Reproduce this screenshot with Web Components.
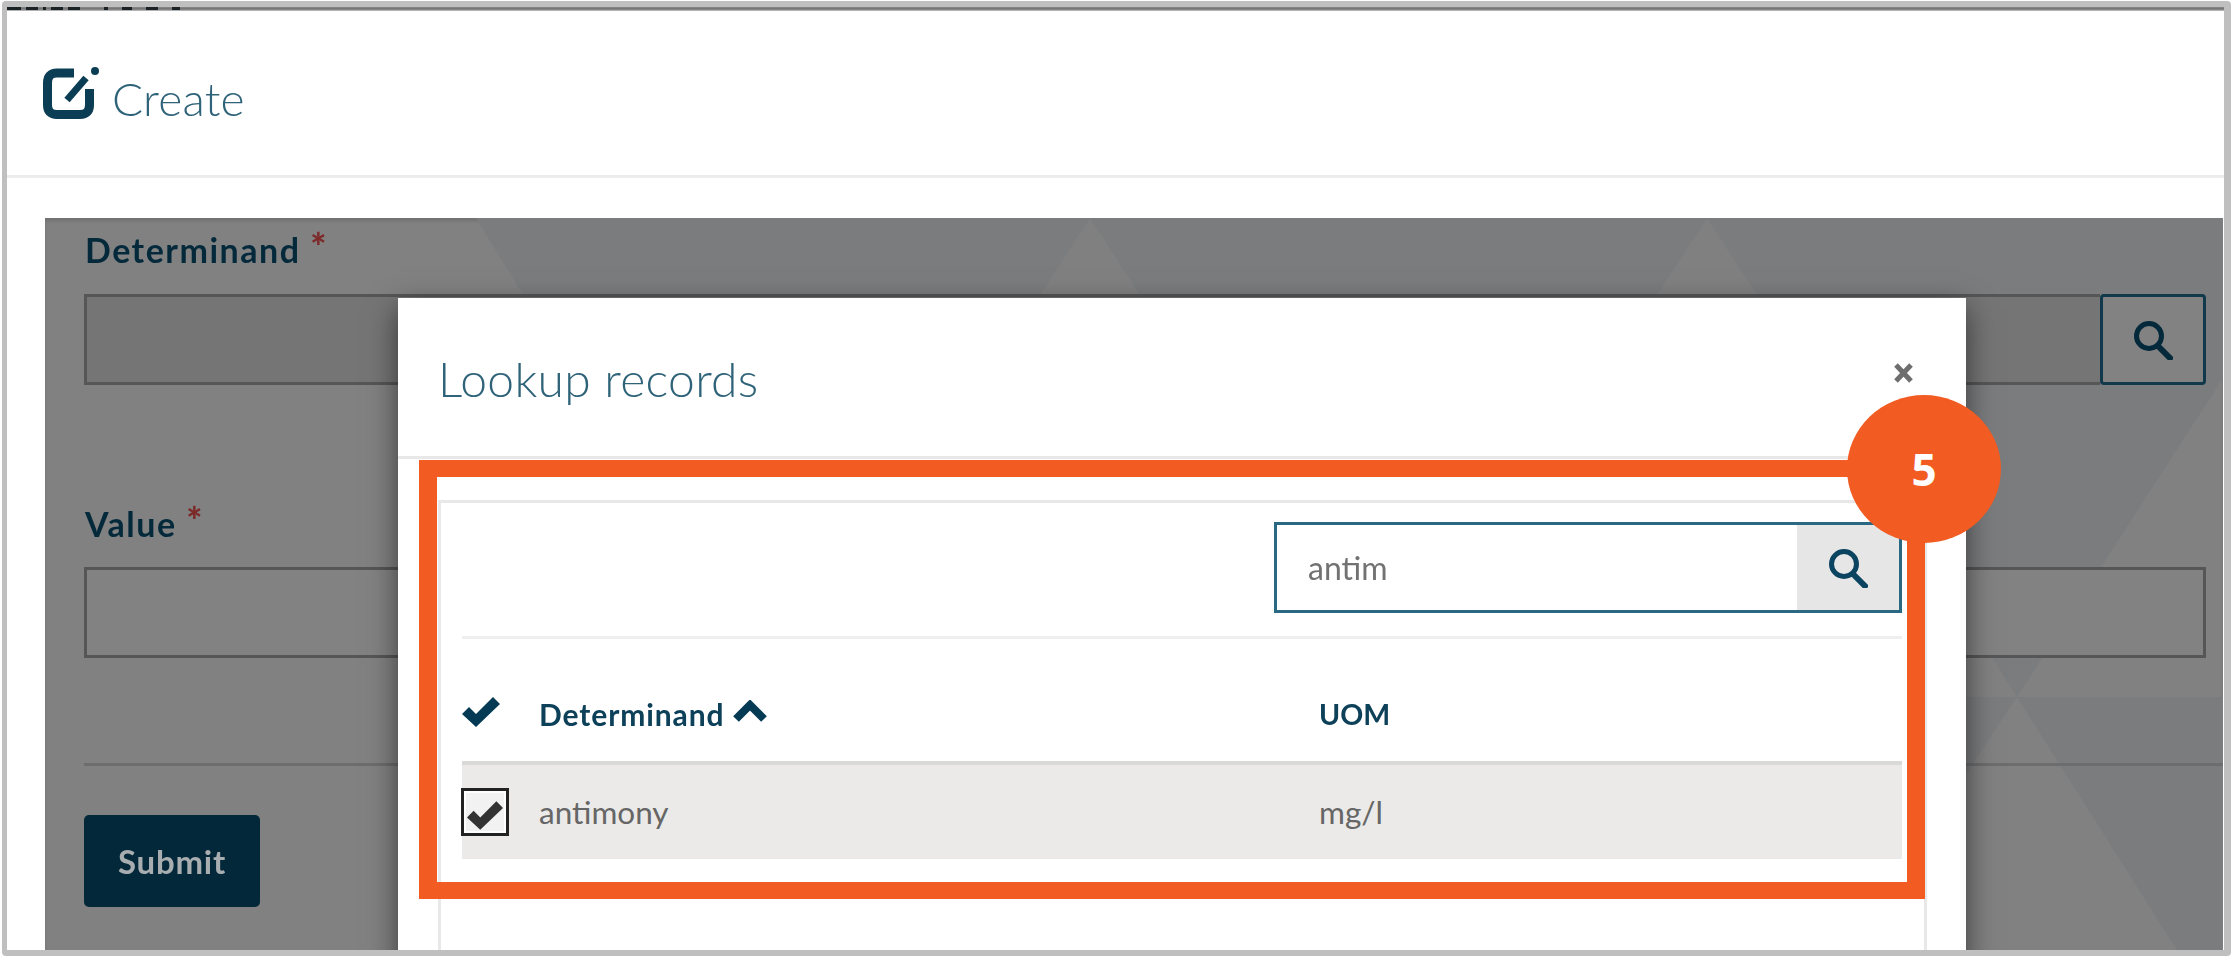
<!DOCTYPE html>
<html lang="en">
<head>
<meta charset="utf-8">
<title>Create</title>
<style>
html,body{margin:0;padding:0;background:#fff;}
body{font-family:"Lato","Liberation Sans",sans-serif;width:2231px;height:957px;overflow:hidden;}
</style>
</head>
<body>
<shot-frame>
  <page-header title-text="Create"></page-header>
  <form-panel>
    <lookup-modal slot="modal" heading="Lookup records">
      <search-box value="antim"></search-box>
      <lookup-table></lookup-table>
    </lookup-modal>
  </form-panel>
  <call-out slot="annotation" number="5"></call-out>
</shot-frame>

<script>
const ICONS = {
  search: `<svg viewBox="0 0 40 40" width="40" height="40" fill="none" stroke="currentColor"><circle cx="16" cy="16" r="12.5" stroke-width="5"/><path d="M25 26 L37 38" stroke-width="6" stroke-linecap="round"/></svg>`,
  edit: `<svg viewBox="0 0 58 52" width="58" height="52" fill="none" stroke="currentColor"><path d="M31 6 H14 Q4.500 6 4.500 16 V38 Q4.500 47.500 14 47.500 H37 Q46.500 47.500 46.500 38 V22" stroke-width="9"/><path d="M24 33 L43 11" stroke-width="7"/><circle cx="52" cy="4" r="4" fill="currentColor" stroke="none"/></svg>`,
  check: `<svg viewBox="0 0 38 30" width="38" height="30" fill="currentColor"><path d="M0 17 L7 10 L14 17 L31 0 L38 7 L14 30 Z"/></svg>`,
  chevron: `<svg viewBox="0 0 34 22" width="34" height="22" fill="none" stroke="currentColor"><path d="M3 19 L17 5 L31 19" stroke-width="8"/></svg>`,
  close: `<svg viewBox="0 0 21 20" width="21" height="20" fill="none" stroke="currentColor"><path d="M3 2 L18 18 M18 2 L3 18" stroke-width="5"/></svg>`
};

function define(name, css, html){
  customElements.define(name, class extends HTMLElement{
    constructor(){ super(); this.attachShadow({mode:'open'}); }
    connectedCallback(){
      const a = n => this.getAttribute(n) || '';
      this.shadowRoot.innerHTML = `<style>${css}</style>` + html(a);
    }
  });
}

define('shot-frame', `
  :host{display:block;box-sizing:border-box;margin:1px 0 0 2px;width:2229px;height:955px;
    border-style:solid;border-color:#bfbfbf;border-width:6px 7px 6px 5px;border-radius:4px;background:#fff;position:relative;overflow:visible;}
  .soft{filter:blur(.6px);height:100%;display:flex;flex-direction:column;}
  .cut{height:4px;flex:none;background:linear-gradient(#8a8a8a,#6f6f6f 50%,#c8c8c8);display:flex;gap:24px;padding-left:0;}
  .cut i{display:block;height:3px;background:#1a2226;}
  .frag{display:flex;gap:5px}
`, () => `
  <div class="soft">
    <div class="cut">
      <span class="frag"><i style="width:14px"></i><i style="width:12px"></i><i style="width:3px"></i><i style="width:12px"></i><i style="width:12px"></i></span>
      <span class="frag" style="gap:14px"><i style="width:4px"></i><i style="width:10px"></i><i style="width:12px"></i><i style="width:8px"></i></span>
    </div>
    <slot></slot>
  </div>
  <slot name="annotation"></slot>
`);

define('page-header', `
  :host{display:flex;flex:none;box-sizing:border-box;height:167px;align-items:flex-start;border-bottom:3px solid #ececec;color:#0b3d55;}
  .icon{display:block;margin:56px 0 0 36px;width:58px;height:52px;color:#0b3d55;}
  h1{margin:63px 0 0 11px;font:300 46px/50px "Lato",sans-serif;color:#2f6379;letter-spacing:.2px;}
`, a => `<span class="icon">${ICONS.edit}</span><h1>${a('title-text')}</h1>`);

define('form-panel', `
  :host{display:grid;flex:none;box-sizing:border-box;margin:40px 1px 0 38px;height:732px;overflow:hidden;position:relative;
    background:#818181;box-shadow:inset 0 3px 3px rgba(0,0,0,.12);}
  .bg{grid-area:1/1;display:block;width:2178px;height:732px;}
  .content{grid-area:1/1;box-sizing:border-box;padding:12px 17px 0 39px;display:flex;flex-direction:column;}
  label{display:block;height:40px;margin-left:1px;font:700 34px/40px "Lato",sans-serif;letter-spacing:1.5px;color:#03293b;white-space:nowrap;}
  label b{font-weight:900;color:#7d2a2a;margin-left:0;font-size:38px;line-height:0;vertical-align:2px;letter-spacing:0;}
  .l1{margin-bottom:24px}
  .l2{margin-top:119px;margin-bottom:23px}
  .row{display:flex;height:91px;}
  .input{flex:1;box-sizing:border-box;border:3px solid #565656;background:#828282;}
  .input.dis{background:#757575;border-right:0;}
  .btn{box-sizing:border-box;width:106px;border:3px solid #11384b;border-radius:4px;background:#828282;color:#03293b;display:flex;align-items:center;justify-content:center;}
  hr{margin:105px -17px 0 0;height:3px;border:0;background:#6d6d6d;flex:none;}
  .submit{margin-top:49px;box-sizing:border-box;width:176px;height:92px;border-radius:5px;background:#02283a;color:#a8adb0;
    font:700 33px/92px "Lato",sans-serif;letter-spacing:.8px;text-align:center;}
`, () => `
  <svg class="bg" viewBox="45 218 2178 732" aria-hidden="true">
    <path fill="#7b7c7e" d="M476 218 H2223 V378 L2017 697 L1930 560 V298 H525 Z"/>
    <path fill="#818181" d="M1090 218 L1038 298 H1142 Z M1707 218 L1655 298 H1759 Z" opacity=".75"/>
    <path fill="#7b7c7e" d="M2017 697 H2223 V950 H2177 Z M2017 697 H1930 V828 Z"/>
  </svg>
  <div class="content">
    <label class="l1">Determinand <b>*</b></label>
    <div class="row"><div class="input dis"></div><div class="btn">${ICONS.search}</div></div>
    <label class="l2">Value <b>*</b></label>
    <div class="row"><div class="input"></div></div>
    <hr>
    <div class="submit">Submit</div>
  </div>
  <slot name="modal"></slot>
`);

define('lookup-modal', `
  :host{position:absolute;left:353px;top:80px;width:1568px;height:700px;box-sizing:border-box;background:#fff;
    box-shadow:0 10px 28px rgba(0,0,0,.55);display:flex;flex-direction:column;}
  header{flex:none;box-sizing:border-box;height:161px;border-bottom:3px solid #e8e8e8;display:flex;justify-content:space-between;align-items:flex-start;padding:0 52px 0 40px;}
  h2{margin:55px 0 0;font:300 48px/52px "Lato",sans-serif;color:#2f6379;letter-spacing:.3px;}
  .x{display:block;margin-top:65px;width:21px;height:20px;color:#6e6e6e;}
  .card{margin:41px 39px 0 40px;box-sizing:border-box;flex:1;border:3px solid #e8e8e8;border-bottom:0;padding:19px 22px 0 21px;}
`, a => `
  <header><h2>${a('heading')}</h2><span class="x">${ICONS.close}</span></header>
  <div class="card"><slot></slot></div>
`);

define('search-box', `
  :host{display:block;padding-bottom:23px;border-bottom:3px solid #efefef;}
  .box{box-sizing:border-box;margin-left:auto;width:628px;height:91px;border:3px solid #2a6883;display:flex;}
  .text{flex:1;padding-left:31px;font:400 32px/85px "Lato",sans-serif;color:#727272;}
  .go{width:102px;background:#e6e6e6;color:#0b4460;display:flex;align-items:center;justify-content:center;}
`, a => `
  <div class="box"><div class="text">${a('value')}</div><div class="go">${ICONS.search}</div></div>
`);

define('lookup-table', `
  :host{display:grid;grid-template-columns:77px 780px 1fr;grid-template-rows:122px 98px;color:#0b3f59;}
  .h{display:flex;align-items:center;font:700 30px/40px "Lato",sans-serif;letter-spacing:.9px;padding-top:28px;box-sizing:border-box;color:#0d4059;}
  .h.c{padding-top:24px;color:#053a55;}
  .h.u{font-size:28.5px;letter-spacing:0;}
  .h svg{display:block}
  .chev{margin-left:9px;height:22px;margin-top:-6px;color:#053a55}
  .r{background:#ebeae8;border-top:4px solid #d9d9d8;box-sizing:border-box;display:flex;align-items:center;font:400 31.5px/40px "Lato",sans-serif;color:#666;}
  .box{box-sizing:border-box;width:48px;height:48px;margin-left:-1px;border:3px solid #222;background:#f2f2f2;outline:0;box-shadow:inset 0 0 0 2px #fff;display:flex;align-items:center;justify-content:center;color:#333;}
  .box svg{width:36px;height:29px;display:block;margin-top:6px}
`, () => `
  <div class="h c">${ICONS.check}</div>
  <div class="h">Determinand<span class="chev">${ICONS.chevron}</span></div>
  <div class="h u">UOM</div>
  <div class="r"><div class="box">${ICONS.check}</div></div>
  <div class="r">antimony</div>
  <div class="r">mg/l</div>
`);

define('call-out', `
  :host{position:absolute;left:412px;top:453px;width:1506px;height:439px;box-sizing:border-box;border:solid #f25c23;border-width:17px 18px;display:block;}
  .badge{position:absolute;left:1410px;top:-82px;width:154px;height:148px;border-radius:50%;background:#f25c23;color:#fff;
    font:700 44px/148px "Open Sans",sans-serif;text-align:center;}
`, a => `<div class="badge">${a('number')}</div>`);
</script>
</body>
</html>
